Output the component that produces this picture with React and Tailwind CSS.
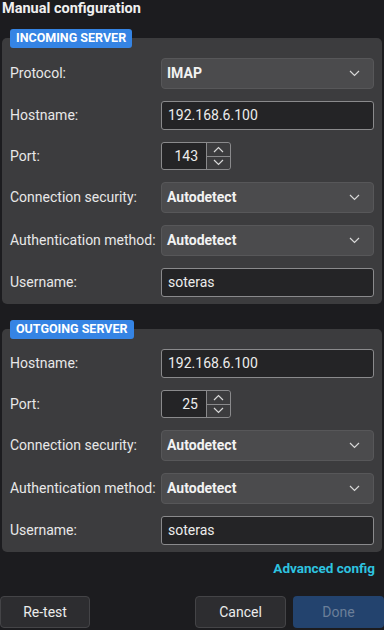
import React from "react";

const font = { fontFamily: 'Roboto, "Noto Sans", sans-serif' };

function Chevron({ up = false, className = "" }) {
  return (
    <svg width="11" height="7" viewBox="0 0 11 7" className={className} fill="none">
      <path
        d={up ? "M1 6 L5.5 1.5 L10 6" : "M1 1 L5.5 5.5 L10 1"}
        stroke="#d8d8d8"
        strokeWidth="1.2"
      />
    </svg>
  );
}

function Label({ children }) {
  return (
    <div className="w-[159px] pl-[8px] text-[14px] text-[#e8e8e8] shrink-0 whitespace-nowrap">{children}</div>
  );
}

function Select({ value }) {
  return (
    <div className="flex-1 h-[31px] rounded-[4px] bg-[#4b4b4d] border border-[#575759] flex items-center justify-between pl-[5px] pr-[13px]">
      <span className="text-[14px] font-bold text-[#f2f2f2]">{value}</span>
      <Chevron />
    </div>
  );
}

function Input({ value }) {
  return (
    <div className="flex-1 h-[29px] rounded-[3px] bg-[#242426] border border-[#8a8a8c] flex items-center pl-[6px]">
      <span className="text-[14px] text-[#ececec]">{value}</span>
    </div>
  );
}

function Spin({ value }) {
  return (
    <div className="h-[28px] w-[70px] rounded-[3px] border border-[#8a8a8c] flex">
      <div className="w-[44px] bg-[#242426] rounded-l-[3px] flex items-center justify-end pr-[8px] text-[14px] text-[#ececec]">
        {value}
      </div>
      <div className="flex-1 flex flex-col border-l border-[#8a8a8c] bg-[#3c3c3e] rounded-r-[3px]">
        <div className="flex-1 flex items-center justify-center border-b border-[#8a8a8c]">
          <Chevron up />
        </div>
        <div className="flex-1 flex items-center justify-center">
          <Chevron />
        </div>
      </div>
    </div>
  );
}

function Row({ label, children }) {
  return (
    <div className="flex items-center pr-[8px]">
      <Label>{label}</Label>
      <div className="flex-1 flex">{children}</div>
    </div>
  );
}

function Panel({ title, children }) {
  return (
    <div className="relative mx-[2px] shrink-0">
      <div className="absolute left-[8px] top-[-9px] h-[19px] px-[6px] rounded-[3px] bg-[#3584e4] flex items-center text-[12.5px] font-bold text-white">
        {title}
      </div>
      <div className="rounded-[5px] bg-[#3c3c3e] pt-[20px] pb-[7px] flex flex-col gap-[12px]">{children}</div>
    </div>
  );
}

export default function App() {
  return (
    <div style={font} className="w-[384px] h-[630px] bg-[#1c1c1f] overflow-hidden flex flex-col">
      <div className="h-[38px] shrink-0 pl-[2px] text-[14.5px] font-bold text-[#f0f0f0] leading-[18px]">
        Manual configuration
      </div>
      <Panel title="INCOMING SERVER">
        <Row label="Protocol:">
          <Select value="IMAP" />
        </Row>
        <Row label="Hostname:">
          <Input value="192.168.6.100" />
        </Row>
        <Row label="Port:">
          <Spin value="143" />
        </Row>
        <Row label="Connection security:">
          <Select value="Autodetect" />
        </Row>
        <Row label="Authentication method:">
          <Select value="Autodetect" />
        </Row>
        <Row label="Username:">
          <Input value="soteras" />
        </Row>
      </Panel>
      <div className="h-[25px] shrink-0" />
      <Panel title="OUTGOING SERVER">
        <Row label="Hostname:">
          <Input value="192.168.6.100" />
        </Row>
        <Row label="Port:">
          <Spin value="25" />
        </Row>
        <Row label="Connection security:">
          <Select value="Autodetect" />
        </Row>
        <Row label="Authentication method:">
          <Select value="Autodetect" />
        </Row>
        <Row label="Username:">
          <Input value="soteras" />
        </Row>
      </Panel>
      <div className="flex justify-end pr-[9px] pt-[6px] h-[44px] shrink-0">
        <span className="text-[13.5px] font-bold text-[#2ec4e0]">Advanced config</span>
      </div>
      <div className="flex items-center shrink-0">
        <div className="w-[90px] h-[32px] rounded-[4px] bg-[#2d2d30] border border-[#444447] flex items-center justify-center text-[14px] text-[#ececec]">
          Re-test
        </div>
        <div className="flex-1" />
        <div className="w-[91px] h-[32px] rounded-[4px] bg-[#2d2d30] border border-[#444447] flex items-center justify-center text-[14px] text-[#ececec]">
          Cancel
        </div>
        <div className="w-[91px] h-[32px] ml-[7px] rounded-[4px] bg-[#23436e] flex items-center justify-center text-[14px] text-[#6b7f99]">
          Done
        </div>
      </div>
    </div>
  );
}
